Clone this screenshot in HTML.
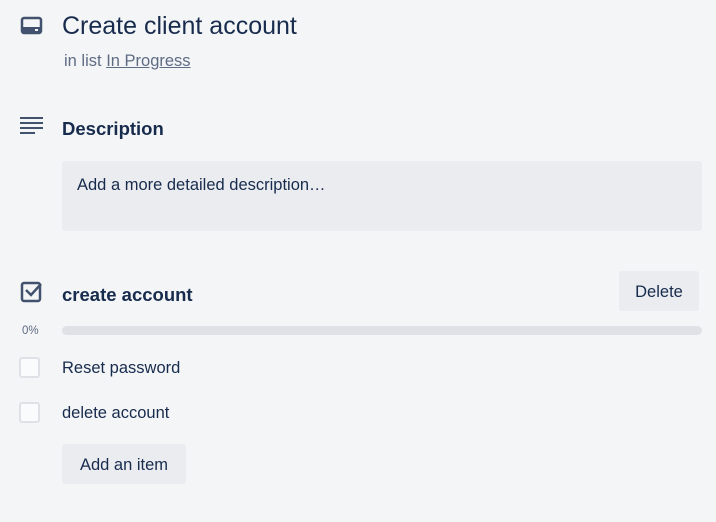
<!DOCTYPE html>
<html><head><style>
body{margin:0;width:716px;height:522px;background:#f4f5f7;font-family:"Liberation Sans",sans-serif;color:#172b4d;position:relative;overflow:hidden}
.a{position:absolute}
</style></head><body>
<svg class="a" style="left:20px;top:16px" width="24" height="20" viewBox="0 0 24 20"><rect x="2" y="2" width="19" height="15" rx="2" fill="none" stroke="#42526e" stroke-width="2.5"/><rect x="2" y="11" width="19" height="6" fill="#42526e"/><rect x="15" y="13" width="3" height="2" fill="#f4f5f7"/></svg>
<div class="a" style="left:62px;top:12px;font-size:25px;color:#172b4d">Create client account</div>
<div class="a" style="left:64px;top:52px;font-size:16.5px;color:#5e6c84">in list <span style="text-decoration:underline">In Progress</span></div>
<svg class="a" style="left:20px;top:117px" width="24" height="20"><g fill="#42526e"><rect x="0" y="0" width="23" height="2"/><rect x="0" y="5" width="23" height="2"/><rect x="0" y="10" width="23" height="2"/><rect x="0" y="15" width="15" height="2"/></g></svg>
<div class="a" style="left:62px;top:118px;font-size:18.5px;font-weight:bold;color:#172b4d">Description</div>
<div class="a" style="left:62px;top:161px;width:640px;height:70px;background:#ebecf0;border-radius:3px"></div>
<div class="a" style="left:77px;top:176px;font-size:16.5px;color:#172b4d">Add a more detailed description…</div>
<svg class="a" style="left:20px;top:280px" width="24" height="24" viewBox="0 0 24 24"><rect x="2" y="3" width="18" height="18" rx="2" fill="none" stroke="#42526e" stroke-width="2.5"/><path d="M6 10l5 5 10-11" fill="none" stroke="#42526e" stroke-width="2.5"/></svg>
<div class="a" style="left:62px;top:284px;font-size:18.5px;font-weight:bold;color:#172b4d">create account</div>
<div class="a" style="left:619px;top:271px;width:80px;height:40px;background:#ebecf0;border-radius:3px;font-size:16.5px;line-height:43px;text-align:center">Delete</div>
<div class="a" style="left:22px;top:325px;font-size:11.5px;color:#5e6c84">0%</div>
<div class="a" style="left:62px;top:326px;width:640px;height:9px;background:#dfe1e6;border-radius:5px"></div>
<div class="a" style="left:19px;top:357px;width:17px;height:17px;border:2px solid #dfe1e6;border-radius:3px;background:#fafbfc"></div>
<div class="a" style="left:62px;top:359px;font-size:16.5px">Reset password</div>
<div class="a" style="left:19px;top:402px;width:17px;height:17px;border:2px solid #dfe1e6;border-radius:3px;background:#fafbfc"></div>
<div class="a" style="left:62px;top:404px;font-size:16.5px">delete account</div>
<div class="a" style="left:62px;top:444px;width:124px;height:40px;background:#ebecf0;border-radius:3px;font-size:16.5px;line-height:42px;text-align:center">Add an item</div>
</body></html>
